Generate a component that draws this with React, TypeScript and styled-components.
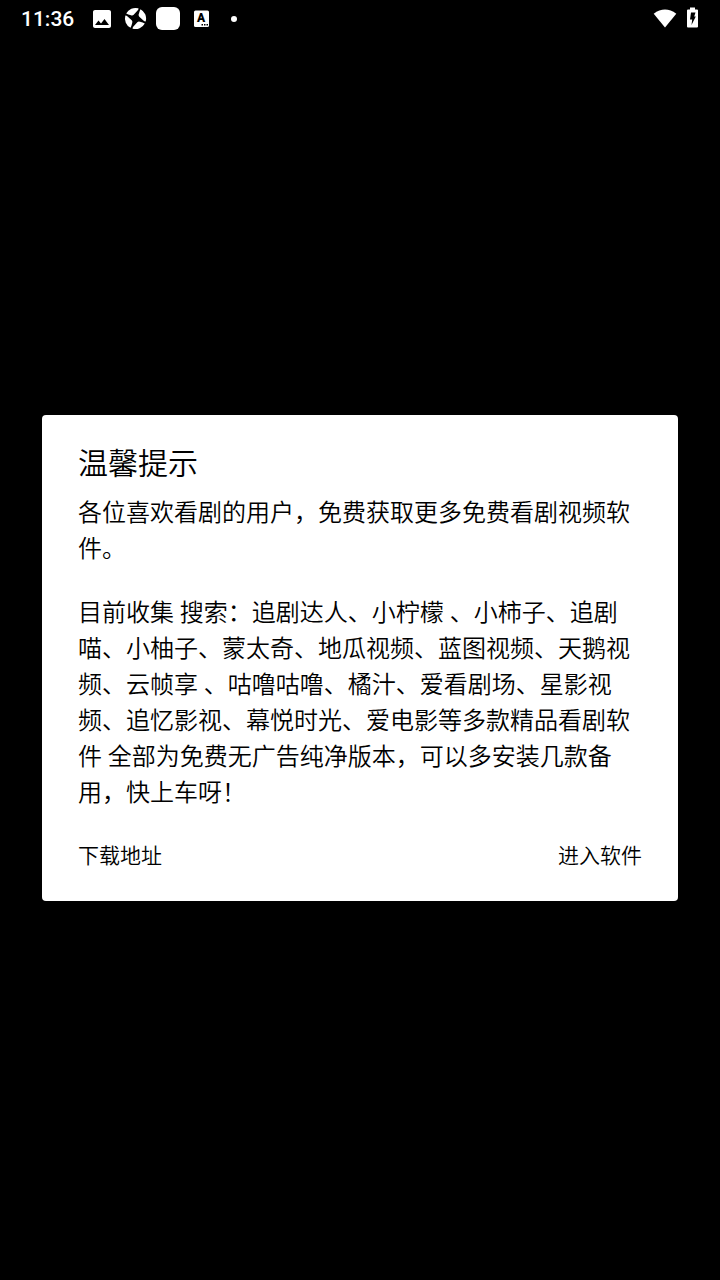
import React from "react";
import styled, { createGlobalStyle } from "styled-components";

const GlobalStyle = createGlobalStyle`
  * { box-sizing: border-box; }
  body {
    margin: 0;
    background: #000;
    font-family: Roboto, "Noto Sans CJK SC", sans-serif;
    font-weight: 350;
  }
`;

const Screen = styled.div`
  min-height: 100vh;
  display: flex;
  flex-direction: column;
`;

const StatusBar = styled.header`
  height: 36px;
  padding: 1px 20px 0 21px;
  display: flex;
  align-items: center;
  justify-content: space-between;
  color: #fff;
`;

const IconGroup = styled.div<{ $gap: number }>`
  display: flex;
  align-items: center;
  gap: ${(p) => p.$gap}px;
`;

const Clock = styled.time`
  font: 500 21px/33px Roboto, sans-serif;
  padding-top: 2px;
  margin-right: 7px;
`;

const AppBadge = styled.span`
  width: 24px;
  height: 23px;
  border-radius: 6px;
  background: #fff;
`;

const Dot = styled.span`
  width: 6px;
  height: 6px;
  margin-left: 9px;
  border-radius: 50%;
  background: #fff;
`;

const Stage = styled.main`
  flex: 1;
  display: flex;
  align-items: center;
  padding: 36px 42px;
`;

const Dialog = styled.section`
  width: 100%;
  padding: 31px 36px 28px;
  border-radius: 4px;
  background: #fff;
  color: #000;
`;

const Title = styled.h1`
  margin: 0 0 13px;
  font-size: 30px;
  line-height: 36px;
  font-weight: inherit;
`;

const Message = styled.p`
  margin: 0 0 28px;
  font-size: 24px;
  line-height: 36px;
`;

const Actions = styled.footer`
  display: flex;
  justify-content: space-between;
`;

const TextButton = styled.button`
  padding: 0;
  border: 0;
  background: none;
  color: #000;
  font-family: inherit;
  font-weight: inherit;
  font-size: 21px;
  line-height: 34px;
`;

const BLADE_ANGLES = [0, 90, 180, 270];

export default function App() {
  return (
    <Screen>
      <GlobalStyle />
      <StatusBar>
        <IconGroup $gap={9}>
          <Clock>11:36</Clock>
          <svg width="24" height="24" viewBox="0 0 24 24" fill="#fff">
            <path d="M21 19V5c0-1.100-.9-2-2-2H5c-1.100 0-2 .9-2 2v14c0 1.100.9 2 2 2h14c1.100 0 2-.9 2-2zM8.500 13.500l2.500 3.010L14.500 12l4.500 6H5l3.500-4.500z" />
          </svg>
          <svg width="24" height="24" viewBox="-12.500 -11.500 24 24" fill="#fff">
            {BLADE_ANGLES.map((angle) => (
              <path
                key={angle}
                transform={`rotate(${angle})`}
                d="M-9.300-5A10.500 10.500 0 0 1 2.800-10.200Q3.400-9.500 2.300-8.200L-1.800-3.800Q-3-2.700-4.500-3.300Q-7.500-4-9.300-5z"
              />
            ))}
          </svg>
          <AppBadge />
          <svg width="24" height="24" viewBox="0 0 24 24">
            <rect x="5" y="3.500" width="15" height="16.500" rx="1.500" fill="#fff" />
            <text x="12" y="15" textAnchor="middle" fontFamily="Roboto, sans-serif" fontSize="12" fontWeight="900">
              A
            </text>
            <path d="M12.500 17H14v1.500h-1.500zM15 17h1.500v1.500H15zM17.500 17H19v1.500h-1.500z" fill="#000" />
          </svg>
          <Dot />
        </IconGroup>
        <IconGroup $gap={9}>
          <svg width="24" height="24" viewBox="0 0 24 24" fill="#fff">
            <path d="M12 20.500.7 6.700Q12-1.500 23.300 6.700z" />
          </svg>
          <svg width="14" height="24" viewBox="0 0 14 24">
            <path d="M1 3.500Q1 2.500 2 2.500h2v-2h5v2h2q1 0 1 1v16q0 1-1 1H2q-1 0-1-1z" fill="#fff" />
            <path d="M5 5.500h4.500L8.200 9.500H9.800L5.500 18 6.200 12.500H4z" fill="#000" />
          </svg>
        </IconGroup>
      </StatusBar>
      <Stage>
        <Dialog role="dialog" aria-labelledby="notice-title">
          <Title id="notice-title">温馨提示</Title>
          <Message>各位喜欢看剧的用户，免费获取更多免费看剧视频软件。</Message>
          <Message>
            目前收集 搜索：追剧达人、小柠檬 、小柿子、追剧喵、小柚子、蒙太奇、地瓜视频、蓝图视频、天鹅视频、云帧享 、咕噜咕噜、橘汁、爱看剧场、星影视频、追忆影视、幕悦时光、爱电影等多款精品看剧软件 全部为免费无广告纯净版本，可以多安装几款备用，快上车呀！
          </Message>
          <Actions>
            <TextButton type="button">下载地址</TextButton>
            <TextButton type="button">进入软件</TextButton>
          </Actions>
        </Dialog>
      </Stage>
    </Screen>
  );
}
